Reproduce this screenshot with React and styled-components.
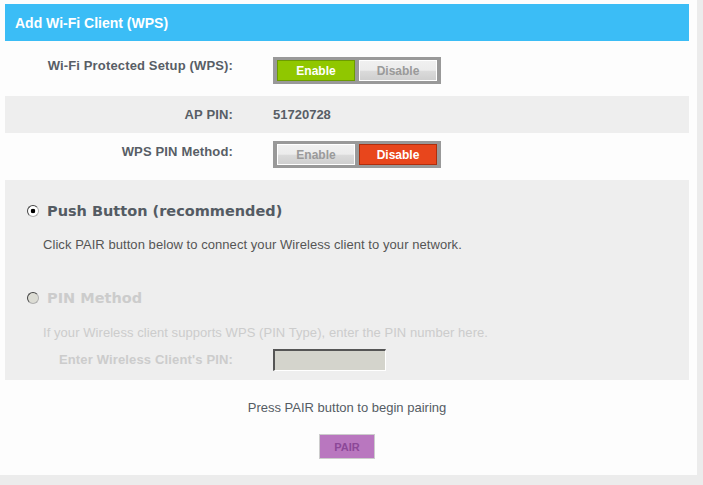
import React from "react";
import styled, { createGlobalStyle, css } from "styled-components";

const Global = createGlobalStyle`
  html, body { margin: 0; padding: 0; background: #ececec; }
  body { font-family: "Liberation Sans", Arial, sans-serif; }
`;

const Card = styled.div`
  width: 697px;
  height: 475px;
  box-sizing: border-box;
  background: #fdfdfd;
  padding: 4px 8px 0 5px;
  display: flex;
  flex-direction: column;
`;

const Header = styled.div`
  height: 37px;
  flex: none;
  background: #3bbdf6;
  color: #fff;
  font-weight: bold;
  font-size: 14px;
  display: flex;
  align-items: center;
  padding-left: 10px;
`;

const FieldRow = styled.div`
  display: grid;
  grid-template-columns: 228px 1fr;
  column-gap: 40px;
  flex: none;
  height: ${(p) => p.$h}px;
  box-sizing: border-box;
  padding-top: ${(p) => p.$pt || 0}px;
  align-items: ${(p) => p.$align || "start"};
  background: ${(p) => (p.$shade ? "#eeeeee" : "transparent")};
  margin-top: ${(p) => p.$mt || 0}px;
`;

const Label = styled.div`
  text-align: right;
  font-weight: bold;
  font-size: 13px;
  letter-spacing: 0.15px;
  line-height: 16px;
  color: ${(p) => (p.$disabled ? "#cccccc" : "#585e66")};
  margin-top: ${(p) => p.$mt || 0}px;
`;

const Value = styled.div`
  font-weight: bold;
  font-size: 13px;
  line-height: 16px;
  color: #585e66;
`;

const Toggle = styled.div`
  display: inline-flex;
  gap: 4px;
  padding: 3px 4px;
  background: #999999;
  width: fit-content;
`;

const ToggleBtn = styled.button`
  width: 78px;
  height: 21px;
  box-sizing: border-box;
  padding: 0;
  font-family: "Liberation Sans", Arial, sans-serif;
  font-weight: bold;
  font-size: 12px;
  cursor: pointer;
  ${(p) =>
    p.$variant === "green"
      ? css`
          background: #90c700;
          border: 1px solid #6c9c00;
          color: #fff;
        `
      : p.$variant === "red"
      ? css`
          background: #e8461c;
          border: 1px solid #b02e0c;
          color: #fff;
        `
      : css`
          background: linear-gradient(#f0f0f0 0%, #ececec 48%, #dadada 55%, #cfcfcf 100%);
          border: 1px solid #ffffff;
          color: #9a9a9a;
        `}
`;

const MethodPanel = styled.div`
  flex: none;
  background: #eeeeee;
  height: 200px;
  box-sizing: border-box;
  padding-top: 21px;
  display: flex;
  flex-direction: column;
`;

const MethodTitle = styled.label`
  display: flex;
  align-items: center;
  gap: 8px;
  padding-left: 22px;
  height: 20px;
  margin-top: ${(p) => p.$mt || 0}px;
  font-family: "DejaVu Sans", Verdana, sans-serif;
  font-weight: bold;
  font-size: 14.5px;
  color: ${(p) => (p.$disabled ? "#cccccc" : "#545b63")};
`;

const Radio = styled.input.attrs({ type: "radio" })`
  appearance: none;
  -webkit-appearance: none;
  margin: 0;
  flex: none;
  width: 12px;
  height: 12px;
  border-radius: 50%;
  box-sizing: border-box;
  border: 1px solid #b0b0b0;
  border-top-color: #444;
  border-left-color: #444;
  background: ${(p) =>
    p.checked
      ? "radial-gradient(circle, #000 0 2px, #fff 2.6px)"
      : p.disabled
      ? "#dcdcd4"
      : "#fff"};
`;

const Note = styled.p`
  margin: ${(p) => p.$mt || 0}px 0 0;
  padding-left: 38px;
  font-size: 13px;
  letter-spacing: 0.06px;
  line-height: 16px;
  color: ${(p) => (p.$disabled ? "#cccccc" : "#555555")};
`;

const PinInput = styled.input`
  width: 113px;
  height: 22px;
  box-sizing: border-box;
  background: #d4d4cc;
  border-top: 2px solid #555;
  border-left: 2px solid #555;
  border-right: 1px solid #fff;
  border-bottom: 1px solid #fff;
  padding: 0 3px;
  margin: 0;
`;

const Footer = styled.div`
  display: flex;
  flex-direction: column;
  align-items: center;
`;

const FooterText = styled.div`
  margin-top: 20px;
  font-size: 13px;
  line-height: 16px;
  color: #555c64;
`;

const PairButton = styled.button`
  margin-top: 18px;
  width: 56px;
  height: 25px;
  box-sizing: border-box;
  background: #b977bf;
  border: 1px solid #cccccc;
  color: #8c4898;
  font-family: "Liberation Sans", Arial, sans-serif;
  font-weight: bold;
  font-size: 11px;
  padding: 0;
  cursor: pointer;
`;

export default function App() {
  return (
    <>
      <Global />
      <Card>
        <Header>Add Wi-Fi Client (WPS)</Header>
        <FieldRow $h={55} $pt={16}>
          <Label $mt={1}>Wi-Fi Protected Setup (WPS):</Label>
          <Toggle>
            <ToggleBtn $variant="green">Enable</ToggleBtn>
            <ToggleBtn>Disable</ToggleBtn>
          </Toggle>
        </FieldRow>
        <FieldRow $h={37} $align="center" $shade>
          <Label>AP PIN:</Label>
          <Value>51720728</Value>
        </FieldRow>
        <FieldRow $h={47} $pt={8}>
          <Label $mt={3}>WPS PIN Method:</Label>
          <Toggle>
            <ToggleBtn>Enable</ToggleBtn>
            <ToggleBtn $variant="red">Disable</ToggleBtn>
          </Toggle>
        </FieldRow>
        <MethodPanel>
          <MethodTitle>
            <Radio name="method" defaultChecked checked readOnly />
            Push Button (recommended)
          </MethodTitle>
          <Note $mt={16}>
            Click PAIR button below to connect your Wireless client to your network.
          </Note>
          <MethodTitle $mt={35} $disabled>
            <Radio name="method" disabled checked={false} readOnly />
            PIN Method
          </MethodTitle>
          <Note $mt={17} $disabled>
            If your Wireless client supports WPS (PIN Type), enter the PIN number here.
          </Note>
          <FieldRow $h={22} $align="center" $mt={8}>
            <Label $disabled>Enter Wireless Client's PIN:</Label>
            <div>
              <PinInput disabled />
            </div>
          </FieldRow>
        </MethodPanel>
        <Footer>
          <FooterText>Press PAIR button to begin pairing</FooterText>
          <PairButton>PAIR</PairButton>
        </Footer>
      </Card>
    </>
  );
}
